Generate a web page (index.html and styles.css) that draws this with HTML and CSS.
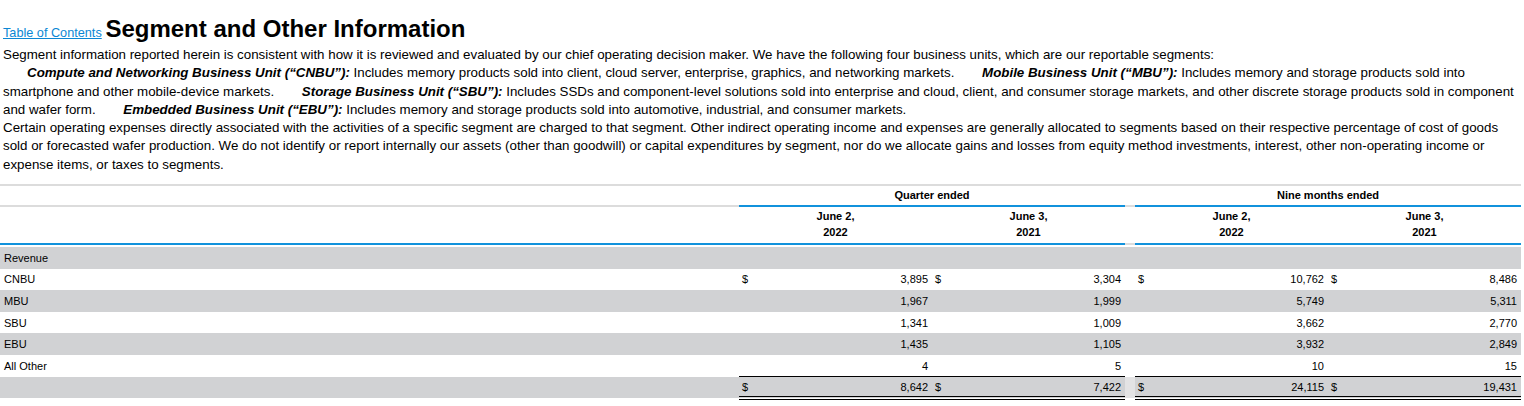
FILE: index.html
```html
<!DOCTYPE html>
<html>
<head>
<meta charset="utf-8">
<link rel="stylesheet" href="styles.css">
</head>
<body>
<div class="page">
  <h1 class="heading"><a class="toc" href="#">Table of Contents</a> <span class="title">Segment and Other Information</span></h1>
  <p class="para">Segment information reported herein is consistent with how it is reviewed and evaluated by our chief operating decision maker. We have the following four business units, which are our reportable segments:</p>
  <p class="para"><span class="seg"><b class="unit">Compute and Networking Business Unit (“CNBU”):</b> Includes memory products sold into client, cloud server, enterprise, graphics, and networking markets. </span><span class="seg"><b class="unit">Mobile Business Unit (“MBU”):</b> Includes memory and storage products sold into smartphone and other mobile-device markets. </span><span class="seg"><b class="unit">Storage Business Unit (“SBU”):</b> Includes SSDs and component-level solutions sold into enterprise and cloud, client, and consumer storage markets, and other discrete storage products sold in component and wafer form. </span><span class="seg"><b class="unit">Embedded Business Unit (“EBU”):</b> Includes memory and storage products sold into automotive, industrial, and consumer markets.</span></p>
  <p class="para">Certain operating expenses directly associated with the activities of a specific segment are charged to that segment. Other indirect operating income and expenses are generally allocated to segments based on their respective percentage of cost of goods sold or forecasted wafer production. We do not identify or report internally our assets (other than goodwill) or capital expenditures by segment, nor do we allocate gains and losses from equity method investments, interest, other non-operating income or expense items, or taxes to segments.</p>

  <table class="fin">
    <colgroup>
      <col class="c-label"><col class="c-val"><col class="c-val"><col class="c-gap"><col class="c-val"><col class="c-val">
    </colgroup>
    <thead>
      <tr class="h-period">
        <th class="h-blank"></th>
        <th colspan="2" class="h-group">Quarter ended</th>
        <th class="gap"></th>
        <th colspan="2" class="h-group">Nine months ended</th>
      </tr>
      <tr class="h-dates">
        <th class="h-blank"></th>
        <th class="h-date">June 2,<br>2022</th>
        <th class="h-date">June 3,<br>2021</th>
        <th class="gap"></th>
        <th class="h-date">June 2,<br>2022</th>
        <th class="h-date">June 3,<br>2021</th>
      </tr>
    </thead>
    <tbody>
      <tr class="spacer"><td colspan="6"></td></tr>
      <tr class="shade">
        <td class="label">Revenue</td><td></td><td></td><td class="gap"></td><td></td><td></td>
      </tr>
      <tr>
        <td class="label">CNBU</td>
        <td><div class="amt"><span>$</span><span>3,895</span></div></td>
        <td><div class="amt"><span>$</span><span>3,304</span></div></td>
        <td class="gap"></td>
        <td><div class="amt"><span>$</span><span>10,762</span></div></td>
        <td><div class="amt"><span>$</span><span>8,486</span></div></td>
      </tr>
      <tr class="shade">
        <td class="label">MBU</td>
        <td><div class="amt"><span></span><span>1,967</span></div></td>
        <td><div class="amt"><span></span><span>1,999</span></div></td>
        <td class="gap"></td>
        <td><div class="amt"><span></span><span>5,749</span></div></td>
        <td><div class="amt"><span></span><span>5,311</span></div></td>
      </tr>
      <tr>
        <td class="label">SBU</td>
        <td><div class="amt"><span></span><span>1,341</span></div></td>
        <td><div class="amt"><span></span><span>1,009</span></div></td>
        <td class="gap"></td>
        <td><div class="amt"><span></span><span>3,662</span></div></td>
        <td><div class="amt"><span></span><span>2,770</span></div></td>
      </tr>
      <tr class="shade">
        <td class="label">EBU</td>
        <td><div class="amt"><span></span><span>1,435</span></div></td>
        <td><div class="amt"><span></span><span>1,105</span></div></td>
        <td class="gap"></td>
        <td><div class="amt"><span></span><span>3,932</span></div></td>
        <td><div class="amt"><span></span><span>2,849</span></div></td>
      </tr>
      <tr>
        <td class="label">All Other</td>
        <td><div class="amt"><span></span><span>4</span></div></td>
        <td><div class="amt"><span></span><span>5</span></div></td>
        <td class="gap"></td>
        <td><div class="amt"><span></span><span>10</span></div></td>
        <td><div class="amt"><span></span><span>15</span></div></td>
      </tr>
      <tr class="shade total">
        <td class="label"></td>
        <td class="tot"><div class="amt"><span>$</span><span>8,642</span></div></td>
        <td class="tot"><div class="amt"><span>$</span><span>7,422</span></div></td>
        <td class="gap"></td>
        <td class="tot"><div class="amt"><span>$</span><span>24,115</span></div></td>
        <td class="tot"><div class="amt"><span>$</span><span>19,431</span></div></td>
      </tr>
    </tbody>
  </table>
</div>
</body>
</html>
```
FILE: styles.css
```css
html, body {
  margin: 0;
  padding: 0;
  background: #ffffff;
}
body {
  font-family: "Liberation Sans", Arial, sans-serif;
  color: #000000;
}
.page {
  width: 1521px;
}
.heading {
  margin: 0;
  padding: 16px 0 0 3px;
  font-size: 13px;
  font-weight: normal;
  line-height: 25px;
}
.toc {
  font-size: 12.7px;
  color: #0b87d4;
  text-decoration: underline;
}
.title {
  font-size: 24px;
  font-weight: bold;
}
.para {
  margin: 0;
  padding: 0 0 0 3px;
  font-size: 13.33px;
  line-height: 18.3px;
}
.seg {
  padding-left: 24px;
}
.unit {
  font-style: italic;
  font-weight: bold;
}

.fin {
  margin-top: 10px;
  width: 1521px;
  border-collapse: collapse;
  table-layout: fixed;
  font-size: 11px;
}
.c-label { width: 739px; }
.c-val { width: 193px; }
.c-gap { width: 10px; }
.fin th, .fin td {
  padding: 0;
}
.h-period th {
  border-top: 2px solid #dcdcdc;
  height: 18px;
  padding-bottom: 1px;
  font-weight: bold;
  text-align: center;
  vertical-align: middle;
}
.h-period .h-blank {
  border-bottom: 2px solid #dcdcdc;
}
.h-period .h-group {
  border-bottom: 2px solid #1192dc;
}
.h-period .gap {
  border-bottom: 2px solid #dcdcdc;
}
.h-dates th {
  height: 35px;
  padding-top: 1px;
  line-height: 16px;
  font-weight: bold;
  text-align: center;
  vertical-align: top;
  border-bottom: 2px solid #1192dc;
}
.h-dates .gap {
  border-bottom: 2px solid #dcdcdc;
}
.fin tbody tr {
  height: 21.6px;
}
.fin tbody tr.spacer {
  height: 2px;
}
.spacer td {
  height: 2px;
}
.shade td {
  background: #d1d2d4;
}
.label {
  padding-left: 4px !important;
}
.amt {
  display: flex;
  justify-content: space-between;
  padding: 0 4px 0 3px;
}
.total td {
  background: #d1d2d4;
}
.total .gap {
  background: #e3e3e4;
}
.tot {
  border-top: 1px solid #000;
  border-bottom: 4px double #000;
}
```
